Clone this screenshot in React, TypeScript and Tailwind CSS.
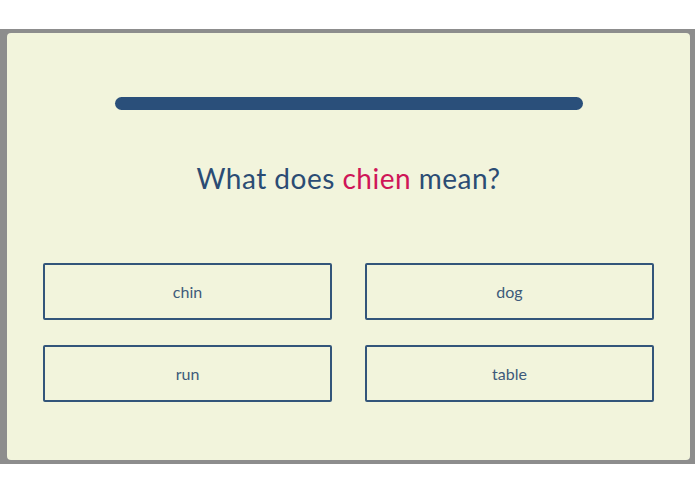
import { FC } from "react";

const options = ["chin", "dog", "run", "table"];

const App: FC = () => {
  return (
    <div className="w-[695px] h-[494px] bg-white overflow-hidden" style={{ fontFamily: "Lato, 'Noto Sans', sans-serif" }}>
      <div className="mt-[29px] h-[435px] bg-[#8d8d8d] pt-[4px] pl-[7px]">
        <div className="w-[683px] h-[427px] bg-[#f2f4dc] rounded-[4px] flex flex-col items-center pt-[64px] px-[36px]">
          <div className="w-[468px] h-[13px] rounded-full bg-[#2a4f7a]" />
          <h2 className="mt-[51px] text-[28px] leading-[34px] tracking-[0.5px] text-[#2b4c74]">
            What does <span className="text-[#cf1558]">chien</span> mean?
          </h2>
          <div className="mt-[68px] w-full grid grid-cols-2 gap-x-[33px] gap-y-[25px]">
            {options.map((option, index) => (
              <button
                key={index}
                className="h-[57px] border-2 border-[#33557a] rounded-[2px] text-[16px] text-[#3d5a7a] flex items-center justify-center"
              >
                {option}
              </button>
            ))}
          </div>
        </div>
      </div>
    </div>
  );
};

export default App;
